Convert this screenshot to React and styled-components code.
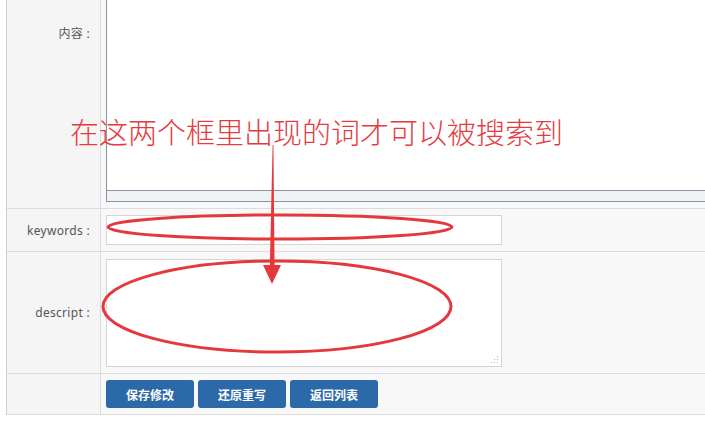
import styled, { createGlobalStyle } from "styled-components";

const GlobalStyle = createGlobalStyle`
  html, body {
    margin: 0;
    padding: 0;
    background: #fff;
    overflow: hidden;
  }
  body {
    font-family: "Noto Sans", "Noto Sans CJK SC", sans-serif;
  }
`;

const Screen = styled.div`
  position: relative;
  height: 422px;
  overflow: hidden;
`;

// the page is scrolled: the top of the editor row is out of view
const FormTable = styled.div`
  margin: -142px 0 0 6px;
  width: 720px;
  border-left: 1px solid #cfcfcf;
`;

const Row = styled.div`
  display: grid;
  grid-template-columns: 94px 1fr;
  border-bottom: 1px solid #dcdcdc;
`;

const Label = styled.div`
  display: flex;
  align-items: center;
  justify-content: flex-end;
  padding-right: 10px;
  background: #f5f5f5;
  border-right: 1px solid #dcdcdc;
  font-size: 12px;
  letter-spacing: 0.3px;
  color: #555;
  box-sizing: border-box;
`;

const Cell = styled.div`
  background: #f8f8f8;
  padding: ${(p) => p.$pad || "6px 5px"};
  height: ${(p) => p.$h}px;
  box-sizing: border-box;
  display: flex;
  gap: ${(p) => p.$gap || 0}px;
`;

const Editor = styled.div`
  flex: 1;
  display: flex;
  flex-direction: column;
  border: 1px solid #8794a1;
  background: #fff;
`;

const EditorBody = styled.div`
  flex: 1;
`;

const StatusBar = styled.div`
  height: 10px;
  background: #f0f3f6;
  border-top: 1px solid #8794a1;
`;

const TextInput = styled.input`
  width: 396px;
  height: 30px;
  box-sizing: border-box;
  border: 1px solid #d6d6d6;
  background: #fff;
  margin: 0;
  outline: none;
`;

const TextArea = styled.textarea`
  width: 396px;
  height: 108px;
  box-sizing: border-box;
  border: 1px solid #d6d6d6;
  margin: 0;
  outline: none;
  resize: none;
  /* small dotted grip in the corner */
  background:
    radial-gradient(circle, #b5b5b5 0.8px, transparent 1px) right 2px bottom 2px / 3px 3px no-repeat,
    radial-gradient(circle, #b5b5b5 0.8px, transparent 1px) right 5px bottom 2px / 3px 3px no-repeat,
    radial-gradient(circle, #b5b5b5 0.8px, transparent 1px) right 8px bottom 2px / 3px 3px no-repeat,
    radial-gradient(circle, #b5b5b5 0.8px, transparent 1px) right 2px bottom 5px / 3px 3px no-repeat,
    radial-gradient(circle, #b5b5b5 0.8px, transparent 1px) right 5px bottom 5px / 3px 3px no-repeat,
    radial-gradient(circle, #b5b5b5 0.8px, transparent 1px) right 2px bottom 8px / 3px 3px no-repeat,
    #fff;
`;

const Button = styled.button`
  width: 88px;
  height: 28px;
  border: none;
  border-radius: 3px;
  background: #2b69a9;
  color: #fff;
  font-family: "Noto Sans CJK SC", sans-serif;
  font-size: 12px;
  font-weight: 700;
  padding: 0;
  cursor: pointer;
`;

const Note = styled.div`
  position: absolute;
  left: 70px;
  top: 117px;
  font-family: "Noto Sans CJK SC", sans-serif;
  font-size: 29px;
  font-weight: 300;
  line-height: 1;
  color: #e43b3f;
  white-space: nowrap;
`;

const Marks = styled.svg`
  position: absolute;
  left: 0;
  top: 0;
  pointer-events: none;
`;

function Annotation() {
  return (
    <>
      <Note>在这两个框里出现的词才可以被搜索到</Note>
      <Marks width="705" height="422" viewBox="0 0 705 422">
        <g fill="none" stroke="#e5383d" strokeWidth="3">
          <ellipse cx="280" cy="227" rx="172" ry="12" />
          <ellipse cx="277" cy="306.5" rx="174" ry="45.5" />
        </g>
        <polygon
          points="272.6,145 273.4,145 274.6,268 269.8,268"
          fill="#e5383d"
        />
        <polygon points="263,265 281,265 272,284" fill="#e5383d" />
      </Marks>
    </>
  );
}

export default function App() {
  return (
    <>
      <GlobalStyle />
      <Screen>
        <FormTable>
          <Row>
            <Label>内容 :</Label>
            <Cell $h={350}>
              <Editor>
                <EditorBody />
                <StatusBar />
              </Editor>
            </Cell>
          </Row>
          <Row>
            <Label>keywords :</Label>
            <Cell $h={42}>
              <TextInput type="text" />
            </Cell>
          </Row>
          <Row>
            <Label>descript :</Label>
            <Cell $h={121} $pad="7px 5px 6px">
              <TextArea />
            </Cell>
          </Row>
          <Row>
            <Label />
            <Cell $h={40} $gap={4}>
              <Button>保存修改</Button>
              <Button>还原重写</Button>
              <Button>返回列表</Button>
            </Cell>
          </Row>
        </FormTable>
        <Annotation />
      </Screen>
    </>
  );
}
